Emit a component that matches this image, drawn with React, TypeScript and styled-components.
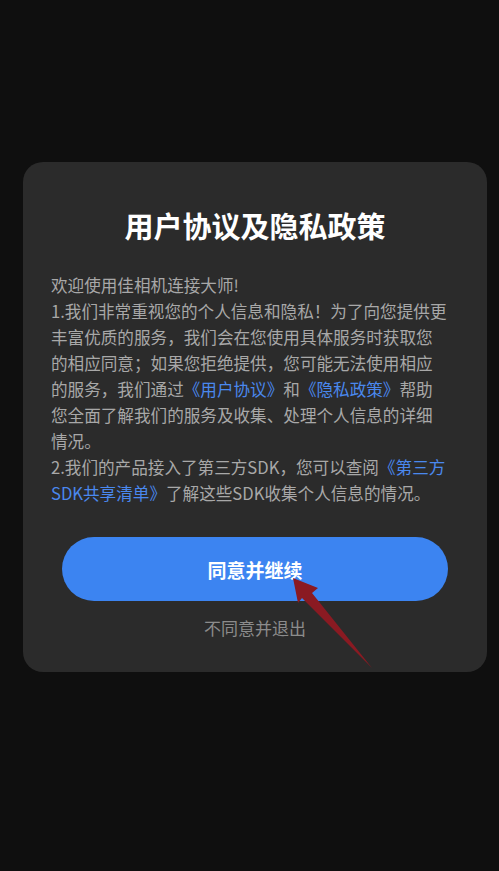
import React from "react";
import styled, { createGlobalStyle } from "styled-components";

const GlobalStyle = createGlobalStyle`
  html, body {
    margin: 0;
    padding: 0;
    background: #0f0f0f;
  }
  body {
    font-family: "Noto Sans CJK SC", "Noto Sans", sans-serif;
  }
`;

const Screen = styled.div`
  position: relative;
  width: 499px;
  height: 871px;
  background: #0f0f0f;
  padding-top: 162px;
  box-sizing: border-box;
  overflow: hidden;
`;

const Dialog = styled.div`
  margin-left: 23px;
  width: 464px;
  height: 510px;
  box-sizing: border-box;
  background: #2b2b2b;
  border-radius: 20px;
  padding: 43px 28px 0 28px;
  display: flex;
  flex-direction: column;
  align-items: stretch;
`;

const Title = styled.h1`
  margin: 0;
  font-size: 29px;
  line-height: 40px;
  font-weight: 700;
  color: #ffffff;
  text-align: center;
`;

const Body = styled.p`
  margin: 27px 0 0 0;
  width: 398px;
  font-size: 16.6px;
  line-height: 26px;
  color: #a8a8a8;
  line-break: strict;
`;

const Link = styled.span`
  color: #4a88ee;
`;

const PrimaryButton = styled.button`
  margin: 31px auto 0 auto;
  width: 386px;
  height: 64px;
  border: none;
  border-radius: 32px;
  background: #3c84f1;
  color: #ffffff;
  font-family: "Noto Sans CJK SC", "Noto Sans", sans-serif;
  font-size: 19px;
  font-weight: 700;
  display: flex;
  align-items: center;
  justify-content: center;
  padding: 0;
`;

const SecondaryButton = styled.button`
  margin: 15px auto 0 auto;
  background: none;
  border: none;
  padding: 0;
  height: 24px;
  line-height: 24px;
  color: #8c8c8c;
  font-family: "Noto Sans CJK SC", "Noto Sans", sans-serif;
  font-size: 17px;
`;

const ArrowLayer = styled.svg`
  position: absolute;
  left: 0;
  top: 0;
  width: 499px;
  height: 871px;
  pointer-events: none;
`;

export default function App() {
  return (
    <>
      <GlobalStyle />
      <Screen>
        <Dialog>
          <Title>用户协议及隐私政策</Title>
          <Body>
            欢迎使用佳相机连接大师!
            <br />
            1.我们非常重视您的个人信息和隐私！为了向您提供更丰富优质的服务，我们会在您使用具体服务时获取您的相应同意；如果您拒绝提供，您可能无法使用相应的服务，我们通过
            <Link>《用户协议》</Link>和<Link>《隐私政策》</Link>
            帮助您全面了解我们的服务及收集、处理个人信息的详细情况。
            <br />
            2.我们的产品接入了第三方SDK，您可以查阅<Link>《第三方SDK共享清单》</Link>
            了解这些SDK收集个人信息的情况。
          </Body>
          <PrimaryButton>同意并继续</PrimaryButton>
          <SecondaryButton>不同意并退出</SecondaryButton>
        </Dialog>
        <ArrowLayer viewBox="0 0 499 871">
          <polygon
            points="293,578 318,588 312,593 372,668 302,598 298,603"
            fill="#8a1a22"
          />
        </ArrowLayer>
      </Screen>
    </>
  );
}
